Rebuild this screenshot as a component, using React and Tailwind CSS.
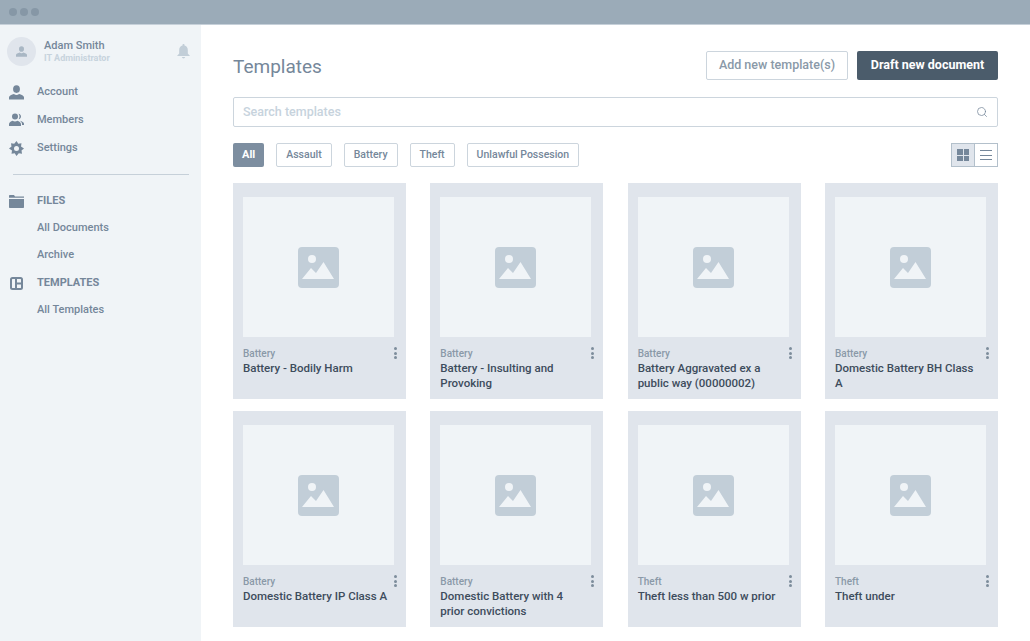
import React from "react";
import { Search } from "lucide-react";

const cards = [
  ["Battery", "Battery - Bodily Harm"],
  ["Battery", "Battery - Insulting and Provoking"],
  ["Battery", "Battery Aggravated ex a public way (00000002)"],
  ["Battery", "Domestic Battery BH Class A"],
  ["Battery", "Domestic Battery IP Class A"],
  ["Battery", "Domestic Battery with 4 prior convictions"],
  ["Theft", "Theft less than 500 w prior"],
  ["Theft", "Theft under"],
];

const Person = ({ className }) => (
  <svg viewBox="0 0 14 14" className={className} fill="currentColor">
    <ellipse cx="7" cy="3.8" rx="3.2" ry="3.6" />
    <path d="M0 13.6v-2.2c0-1.5 2.6-2.3 4.6-3 .8.6 1.6.9 2.4.9s1.600-.3 2.400-.9c2 .7 4.600 1.500 4.600 3v2.200z" />
  </svg>
);

const Card = ({ tag, title }) => (
  <div className="h-[216px] bg-[#e0e5ec] px-[10px] pt-[14px]">
    <div className="flex h-[140px] w-[151px] items-center justify-center bg-[#f0f4f7]">
      <svg width="41" height="41" viewBox="0 0 41 41">
        <rect width="41" height="41" rx="4" fill="#c2ced8" />
        <circle cx="14" cy="12" r="4" fill="#f0f4f7" />
        <path d="M4 32 L13 21 L18 26 L25.500 15 L36 32 Z" fill="#f0f4f7" />
      </svg>
    </div>
    <div className="relative pt-[10px]">
      <div className="text-[10px] leading-[13px] font-medium text-[#8a99a8]">{tag}</div>
      <div className="mt-[1px] w-[146px] text-[11.5px] leading-[15px] font-medium text-[#3d4c5c]">{title}</div>
      <div className="absolute top-[10px] right-[-1px] flex flex-col gap-[1.500px]">
        <span className="h-[3px] w-[3px] rounded-full bg-[#7d8d9c]" />
        <span className="h-[3px] w-[3px] rounded-full bg-[#7d8d9c]" />
        <span className="h-[3px] w-[3px] rounded-full bg-[#7d8d9c]" />
      </div>
    </div>
  </div>
);

const NavLink = ({ icon, children }) => (
  <div className="flex h-[28px] items-center">
    <div className="flex w-[37px] justify-center pl-[6px] pr-[10px] text-[#75879a]">{icon}</div>
    <span className="text-[11px] font-medium text-[#75879a]">{children}</span>
  </div>
);

const Chip = ({ children, active }) => (
  <div
    className={
      active
        ? "flex h-[24px] items-center rounded-[2px] bg-[#7d8ea0] px-[9px] text-[11px] font-bold text-white"
        : "flex h-[24px] items-center rounded-[2px] border border-[#ccd5dd] bg-white px-[9px] text-[10.500px] font-medium text-[#75879a]"
    }
  >
    {children}
  </div>
);

export default function App() {
  return (
    <div
      className="flex h-[641px] w-[1030px] flex-col overflow-hidden bg-white"
      style={{ fontFamily: "Roboto, sans-serif" }}
    >
      <div className="flex h-[25px] shrink-0 items-center gap-[3px] border-b border-[#c6d0d9] bg-[#9babb8] pl-[9px] pb-[1px]">
        <span className="h-[8px] w-[8px] rounded-full bg-[#8697a6]" />
        <span className="h-[8px] w-[8px] rounded-full bg-[#8697a6]" />
        <span className="h-[8px] w-[8px] rounded-full bg-[#8697a6]" />
      </div>
      <div className="flex min-h-0 flex-1">
        <aside className="w-[201px] shrink-0 bg-[#f0f4f7] pt-[12px]">
          <div className="flex items-center pl-[7px]">
            <div className="flex h-[29px] w-[29px] items-center justify-center rounded-full bg-[#e0e5ec]">
              <Person className="h-[11px] w-[11px] text-[#a9b7c4]" />
            </div>
            <div className="ml-[8px] w-[133px]">
              <div className="text-[11px] leading-[13px] font-medium text-[#75879a]">Adam Smith</div>
              <div className="text-[9px] leading-[12px] font-bold text-[#c7d3dd]">IT Administrator</div>
            </div>
            <svg width="13" height="15" viewBox="0 0 13 15" fill="#c2ced8">
              <path d="M6.500 0c.6 0 1 .4 1 1v.6c2 .5 3.300 2.200 3.300 4.400v3.500L13 12H0l2.200-2.500V6c0-2.200 1.300-3.900 3.300-4.400V1c0-.6.4-1 1-1z" />
              <path d="M4.800 13h3.400c-.2.800-.9 1.400-1.700 1.400S5 13.800 4.800 13z" />
            </svg>
          </div>
          <div className="mt-[12px]">
            <NavLink icon={<Person className="h-[15px] w-[15px]" />}>Account</NavLink>
            <NavLink
              icon={
                <svg className="h-[14px] w-[15px]" viewBox="0 0 15 14" fill="currentColor">
                  <circle cx="6" cy="3.500" r="3" />
                  <path d="M0 13v-2c0-1.500 2-2.800 3.600-3.300.7.500 1.500.8 2.400.8s1.700-.3 2.400-.8C10 8.200 12 9.500 12 11v2z" />
                  <path d="M9.500.8c1.500.2 2.500 1.300 2.500 2.700s-1 2.500-2.400 2.700c.6-.8.9-1.700.9-2.700s-.3-2-1-2.700zM11 7.700c2 .5 4 1.500 4 3V12h-2v-1c0-1.300-1-2.400-2-3.300z" />
                </svg>
              }
            >
              Members
            </NavLink>
            <NavLink
              icon={
                <svg className="h-[15px] w-[15px]" viewBox="0 0 15 15">
                  <path
                    fill="currentColor"
                    fillRule="evenodd"
                    d="M7.500 0l1.800 2.700 3.200-.5-.5 3.200L15 7.500l-2.500 2.100.5 3.200-3.200-.5L7.500 15l-1.800-2.700-3.200.5.5-3.200L0 7.500l2.500-2.100-.5-3.200 3.200.5zM7.500 5a2.500 2.500 0 1 0 0 5 2.500 2.500 0 0 0 0-5z"
                  />
                </svg>
              }
            >
              Settings
            </NavLink>
          </div>
          <div className="mt-[12px] ml-[13px] h-[1px] w-[176px] bg-[#c6d0d9]" />
          <div className="mt-[12px]">
            <NavLink
              icon={
                <svg className="h-[13px] w-[15px]" viewBox="0 0 15 13" fill="currentColor">
                  <path d="M0 1c0-.6.4-1 1-1h4l1 1.500h9v1.300H0z" />
                  <path d="M0 4h15v8c0 .6-.4 1-1 1H1c-.6 0-1-.4-1-1z" />
                </svg>
              }
            >
              <span className="font-bold">FILES</span>
            </NavLink>
            <div className="flex h-[27px] items-center pl-[37px] text-[11px] font-medium text-[#75879a]">All Documents</div>
            <div className="flex h-[27px] items-center pl-[37px] text-[11px] font-medium text-[#75879a]">Archive</div>
            <NavLink
              icon={
                <svg className="h-[13px] w-[13px]" viewBox="0 0 13 13" fill="none" stroke="currentColor" strokeWidth="2">
                  <rect x="1" y="1" width="11" height="11" rx="1.500" />
                  <path d="M6 1v11M6 6.500h6" />
                </svg>
              }
            >
              <span className="font-bold">TEMPLATES</span>
            </NavLink>
            <div className="flex h-[27px] items-center pl-[37px] text-[11px] font-medium text-[#75879a]">All Templates</div>
          </div>
        </aside>
        <main className="min-w-0 flex-1 pt-[26px] pl-[32px] pr-[32px]">
          <div className="flex h-[29px] items-center justify-between">
            <h1 className="pt-[4px] text-[19px] font-normal text-[#75879a]">Templates</h1>
            <div className="flex gap-[9px]">
              <div className="flex h-[29px] w-[142px] items-center justify-center rounded-[2px] border border-[#ccd5dd] text-[12.500px] font-medium text-[#8a99a8]">
                Add new template(s)
              </div>
              <div className="flex h-[29px] w-[141px] items-center justify-center rounded-[2px] bg-[#4b5c6b] text-[12.500px] font-bold text-white">
                Draft new document
              </div>
            </div>
          </div>
          <div className="mt-[17px] flex h-[30px] items-center justify-between rounded-[2px] border border-[#ccd5dd] pr-[9px] pl-[9px]">
            <span className="text-[12.500px] font-medium text-[#c7d3dd]">Search templates</span>
            <Search className="h-[12px] w-[12px] text-[#75879a]" strokeWidth={1.500} />
          </div>
          <div className="mt-[16px] flex items-center">
            <div className="flex gap-[12px]">
              <Chip active>All</Chip>
              <Chip>Assault</Chip>
              <Chip>Battery</Chip>
              <Chip>Theft</Chip>
              <Chip>Unlawful Possesion</Chip>
            </div>
            <div className="ml-auto flex h-[24px] w-[47px] border border-[#b3c0cb]">
              <div className="flex w-[23px] items-center justify-center border-r border-[#b3c0cb] bg-[#e0e5ec]">
                <div className="grid grid-cols-2 gap-[1px]">
                  <span className="h-[5.500px] w-[5.500px] bg-[#75879a]" />
                  <span className="h-[5.500px] w-[5.500px] bg-[#75879a]" />
                  <span className="h-[5.500px] w-[5.500px] bg-[#75879a]" />
                  <span className="h-[5.500px] w-[5.500px] bg-[#75879a]" />
                </div>
              </div>
              <div className="flex flex-1 flex-col items-center justify-center gap-[3.500px]">
                <span className="h-[1px] w-[12px] bg-[#75879a]" />
                <span className="h-[1px] w-[12px] bg-[#75879a]" />
                <span className="h-[1px] w-[12px] bg-[#75879a]" />
              </div>
            </div>
          </div>
          <div className="mt-[16px] grid grid-cols-[repeat(4,173px)] justify-between gap-y-[12px]">
            {cards.map((c) => (
              <Card key={c[1]} tag={c[0]} title={c[1]} />
            ))}
          </div>
        </main>
      </div>
    </div>
  );
}
